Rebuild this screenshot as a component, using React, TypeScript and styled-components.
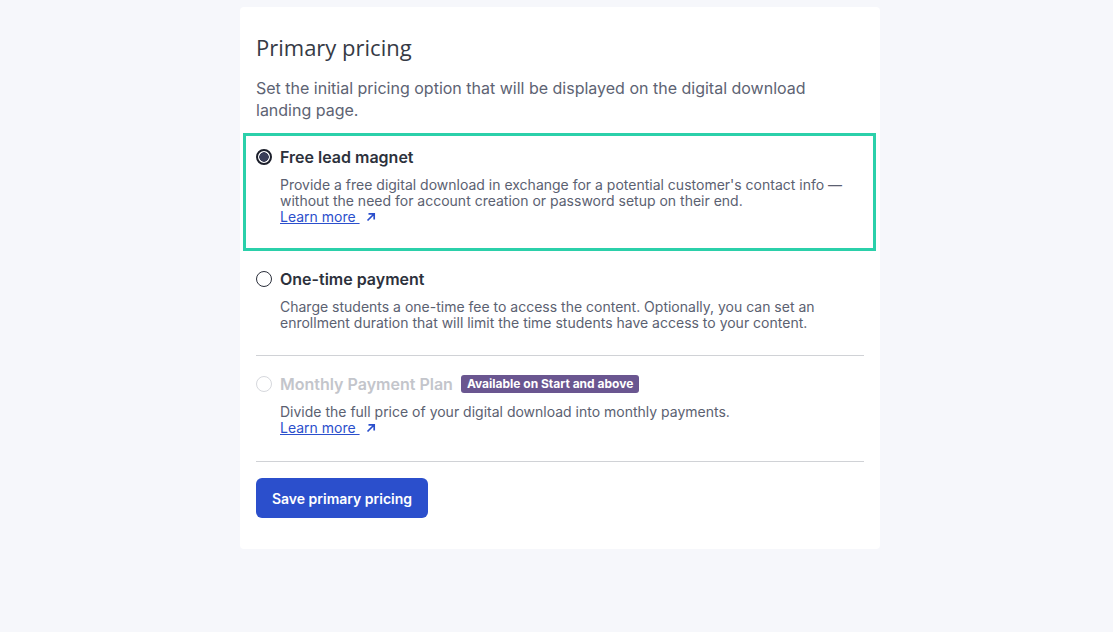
import styled, { createGlobalStyle } from "styled-components"

const GlobalStyle = createGlobalStyle`
  html, body {
    margin: 0;
    padding: 0;
    background: #f6f7fb;
    font-family: Inter, "Noto Sans", sans-serif;
  }
`

type Option = {
  id: string
  title: string
  description: string[]
  learnMore?: boolean
  checked?: boolean
  disabled?: boolean
  badge?: string
  highlighted?: boolean
}

const options: Option[] = [
  {
    id: "free",
    title: "Free lead magnet",
    description: [
      "Provide a free digital download in exchange for a potential customer's contact info —",
      "without the need for account creation or password setup on their end.",
    ],
    learnMore: true,
    checked: true,
    highlighted: true,
  },
  {
    id: "once",
    title: "One-time payment",
    description: [
      "Charge students a one-time fee to access the content. Optionally, you can set an",
      "enrollment duration that will limit the time students have access to your content.",
    ],
  },
]

const LinkArrow = () => (
  <svg width="12" height="12" viewBox="0 0 12 12" fill="none" stroke="currentColor" strokeWidth="1.7">
    <path d="M2.5 9.5 L9 3 M3.5 2.8 H9.2 V8.5" />
  </svg>
)

const LearnMore = () => (
  <LinkRow>
    <Link href="#">Learn more </Link>
    <LinkArrow />
  </LinkRow>
)

const PricingOption: React.FC<{ option: Option }> = ({ option }) => (
  <OptionItem $highlighted={option.highlighted}>
    <OptionHead>
      <Radio $checked={option.checked} $disabled={option.disabled} />
      <OptionTitle $disabled={option.disabled}>{option.title}</OptionTitle>
      {option.badge && <Badge>{option.badge}</Badge>}
    </OptionHead>
    <OptionBody>
      {option.description.map((line) => (
        <div key={line}>{line}</div>
      ))}
      {option.learnMore && <LearnMore />}
    </OptionBody>
  </OptionItem>
)

const App: React.FC = () => (
  <>
    <GlobalStyle />
    <Page>
      <Card>
        <Heading>Primary pricing</Heading>
        <Intro>
          Set the initial pricing option that will be displayed on the digital download
          <br />
          landing page.
        </Intro>
        <Options>
          {options.map((o) => (
            <PricingOption key={o.id} option={o} />
          ))}
        </Options>
        <Divider />
        <PricingOption
          option={{
            id: "monthly",
            title: "Monthly Payment Plan",
            description: ["Divide the full price of your digital download into monthly payments."],
            learnMore: true,
            disabled: true,
            badge: "Available on Start and above",
          }}
        />
        <Divider $bottom />
        <SaveButton type="button">Save primary pricing</SaveButton>
      </Card>
    </Page>
  </>
)

const Page = styled.div`
  min-height: 632px;
  display: flex;
  justify-content: center;
  padding: 7px 0 0 7px;
  box-sizing: border-box;
`

const Card = styled.div`
  width: 640px;
  height: 542px;
  box-sizing: border-box;
  background: #ffffff;
  border-radius: 4px;
  padding: 25px 16px 31px;
  display: flex;
  flex-direction: column;
`

const Heading = styled.h2`
  margin: 0;
  font-family: "Open Sans", sans-serif;
  font-weight: 400;
  font-size: 22px;
  line-height: 30px;
  color: #363a45;
`

const Intro = styled.p`
  margin: 15px 0 12px;
  font-size: 16px;
  line-height: 22px;
  color: #5d6373;
`

const Options = styled.div`
  display: flex;
  flex-direction: column;
  gap: 17px;
`

const OptionItem = styled.div<{ $highlighted?: boolean }>`
  display: flex;
  flex-direction: column;
  gap: 9px;
  ${({ $highlighted }) =>
    $highlighted
      ? `
    margin: 0 -12px 0 -13px;
    padding: 10px 9px 23px 10px;
    border: 3px solid #2bd0aa;
  `
      : ""}
`

const OptionHead = styled.div`
  display: flex;
  align-items: center;
  gap: 8px;
  height: 22px;
`

const Radio = styled.span<{ $checked?: boolean; $disabled?: boolean }>`
  width: 16px;
  height: 16px;
  box-sizing: border-box;
  border-radius: 50%;
  flex-shrink: 0;
  border: ${({ $checked, $disabled }) =>
    $checked ? "2px solid #1c1f2b" : $disabled ? "1px solid #d6d8dd" : "1.5px solid #2b2f3b"};
  background: ${({ $checked }) => ($checked ? "radial-gradient(circle, #3a3e58 0 4.5px, #fff 5px)" : "#fff")};
`

const OptionTitle = styled.span<{ $disabled?: boolean }>`
  font-size: 16px;
  font-weight: 600;
  color: ${({ $disabled }) => ($disabled ? "#c3c5cb" : "#2d313c")};
`

const Badge = styled.span`
  background: #6a5690;
  color: #ffffff;
  font-size: 12px;
  font-weight: 700;
  line-height: 18px;
  padding: 0 6px;
  border-radius: 3px;
`

const OptionBody = styled.div`
  padding-left: 24px;
  font-size: 14px;
  line-height: 16px;
  color: #5b6171;
`

const LinkRow = styled.div`
  display: flex;
  align-items: center;
  gap: 5px;
  color: #2b4fcc;
`

const Link = styled.a`
  color: #2b4fcc;
  text-decoration: underline;
  white-space: pre;
`

const Divider = styled.hr<{ $bottom?: boolean }>`
  margin: ${({ $bottom }) => ($bottom ? "25px 0 16px" : "24px 0 17px")};
  border: none;
  border-top: 1px solid #d0d2d6;
`

const SaveButton = styled.button`
  align-self: flex-start;
  height: 40px;
  width: 172px;
  border: none;
  border-radius: 6px;
  background: #2b4fcc;
  color: #ffffff;
  font-family: Inter, sans-serif;
  font-size: 14px;
  font-weight: 600;
`

export default App
